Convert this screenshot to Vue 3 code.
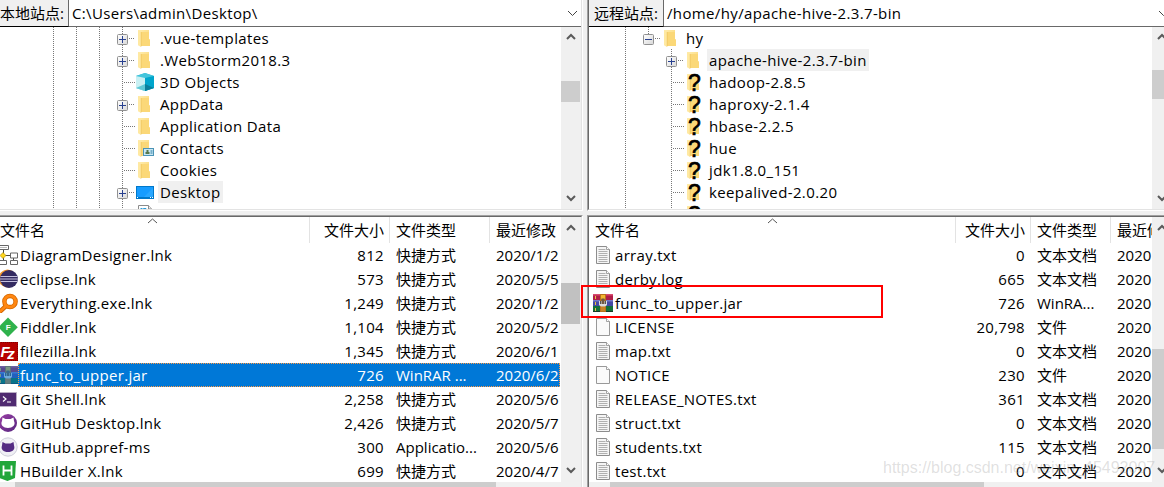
<template>
  <main class="window">
    <!-- icon sprite -->
    <svg class="sprite" aria-hidden="true">
      <defs>
        <linearGradient id="folderFill" x1="0" y1="0" x2="1" y2="1">
          <stop offset="0" stop-color="#ffeeb0" />
          <stop offset="1" stop-color="#f9cf63" />
        </linearGradient>
        <linearGradient id="purpleFill" x1="0" y1="0" x2="1" y2="1">
          <stop offset="0" stop-color="#9a3fa5" />
          <stop offset="1" stop-color="#56267f" />
        </linearGradient>
        <linearGradient id="boxFill" x1="0" y1="0" x2="1" y2="1">
          <stop offset="0" stop-color="#fff" />
          <stop offset="1" stop-color="#d8d8d8" />
        </linearGradient>
      </defs>
      <symbol id="folder" viewBox="0 0 20 20">
        <path d="M3 2h11v9.500h1V18H6z" fill="url(#folderFill)" />
        <path d="M6 4h8v7.500h1V18H6z" fill="#fbd878" />
        <path d="M3 2l3 1.500V19l-3-1.800z" fill="#ffe9a2" />
        <path d="M6.200 4v14.500" stroke="#e9c15a" stroke-width=".6" />
      </symbol>
      <symbol id="unknown" viewBox="0 0 20 20">
        <use href="#folder" />
      </symbol>
      <symbol id="cube" viewBox="0 0 20 20">
        <path d="M10 1l9 3v12l-9 3-9-3V4z" fill="#25b5d3" />
        <path d="M10 1l9 3-9 3-9-3z" fill="#43c5dc" />
        <path d="M1 4l9 2v13l-9-3z" fill="#c9f0f3" />
        <path d="M10 6l9-2v12l-9 3z" fill="#00a5cc" />
        <path d="M1 16l9-4v7z" fill="#5fc9d6" />
        <path d="M10 12l9 4-9 3z" fill="#087f9c" />
      </symbol>
      <symbol id="contacts" viewBox="0 0 20 20">
        <use href="#folder" />
        <rect x="8.500" y="10.500" width="10" height="7" fill="#c8e7f4" stroke="#4b93b5" />
        <path d="M10.500 16v-2h1v-2h2v2h1v2z" fill="#56774d" />
        <path d="M15.500 13h2m-2 2h2" stroke="#2678a0" />
      </symbol>
      <symbol id="desktop" viewBox="0 0 20 20">
        <rect x="1" y="4" width="18" height="13" fill="#0078c9" />
        <rect x="2" y="5" width="16" height="10" fill="#169cff" />
        <path d="M9 15l9-9v9z" fill="#29a7ff" />
        <path d="M2 15.500h1m12 0h1m1 0h1" stroke="#fff" />
      </symbol>
      <symbol id="page" viewBox="0 0 20 20">
        <path d="M3.500 1.500h10l3 3.500v13.500h-13z" fill="#fff" stroke="#8b8b8b" />
        <path d="M8.500 4.500h2.500V8H8.500zm-3 0h2" fill="#2a9bd8" stroke="#2a9bd8" />
        <path d="M13.500 1.500V5h3" fill="#eee" stroke="#8b8b8b" />
      </symbol>
      <symbol id="text" viewBox="0 0 20 20">
        <path d="M3.500 1.500h10l3 3v14h-13z" fill="#f5f5f5" stroke="#8d8d8d" />
        <path d="M13.500 1.500v3h3" fill="#fff" stroke="#8d8d8d" stroke-width=".8" />
        <path d="M5.500 4.500h7m-7 2h9m-9 2h9m-9 2h9m-9 2h9m-9 2h9m-9 2h9" stroke="#b0b0b0" />
      </symbol>
      <symbol id="file" viewBox="0 0 20 20">
        <path d="M3.500 1.500h10l3 3v14h-13z" fill="#fafafa" stroke="#999" />
        <path d="M13.500 1.500v3h3" fill="#fff" stroke="#8d8d8d" stroke-width=".8" />
      </symbol>
      <symbol id="jar" viewBox="0 0 20 20">
        <path d="M0 1h20v6H0z" fill="#b01d48" />
        <path d="M0 1h20v1.500H0z" fill="#d94c70" />
        <path d="M0 7h20v6H0z" fill="#4249a5" />
        <path d="M0 7h20v1.500H0z" fill="#7479c9" />
        <path d="M0 13h20v6H0z" fill="#12713a" />
        <path d="M0 18h20v1H0z" fill="#163e28" />
        <path d="M2.500 3v3m0 3v3m0 3v3" stroke="#f0be3f" />
        <path d="M7 1h6v18H7z" fill="#b8701c" />
        <path d="M8 2h4v4H8z" fill="#f2b62f" />
        <path d="M8 14h4v4H8z" fill="#c98424" />
        <path d="M6 8h8v4l-2 1.500H8L6 12z" fill="#ddd" />
        <path d="M8.500 5.500h3V11h-3z" fill="#715a43" />
        <path d="M7.500 8v3m5-3v3" stroke="#555" />
      </symbol>
      <symbol id="jarSelected" viewBox="0 0 20 20">
        <use href="#jar" />
        <path d="M0 1h20v18H0z" fill="#0078d7" opacity=".5" />
      </symbol>
      <symbol id="diagram" viewBox="0 0 20 20">
        <path d="M5.500 5v11M5 10.500h7M15.500 12v4" stroke="#444" />
        <path d="M.500.500h10v4H.500zM12.500 8h7v5h-7zM.500 15.500h8v4h-8zm12 0h7v4h-7z" fill="#fff" stroke="#666" />
        <path d="M2 2.500h7" stroke="#bbb" />
        <path d="M5 7.500l3 3-3 3-3-3z" fill="#ffd51c" stroke="#a48400" stroke-width=".6" />
      </symbol>
      <symbol id="eclipse" viewBox="0 0 20 20">
        <circle cx="9.500" cy="9.500" r="9" fill="#f3962b" />
        <circle cx="11" cy="10" r="9" fill="#342b62" />
        <path d="M2.500 7.500h17M2 10h18M2.500 12.500h17" stroke="#c3bfdd" stroke-width="1.200" />
      </symbol>
      <symbol id="everything" viewBox="0 0 20 20">
        <path d="M8.500 12.500L1.500 19" stroke="#cd6200" stroke-width="4.500" />
        <circle cx="12" cy="8.500" r="5.600" fill="#fff" stroke="#d86a00" stroke-width="4.500" />
        <path d="M8.500 12.500L1.500 19" stroke="#ff8712" stroke-width="2.800" />
        <circle cx="12" cy="8.500" r="5.600" fill="none" stroke="#ff8712" stroke-width="2.800" />
      </symbol>
      <symbol id="fiddler" viewBox="0 0 20 20">
        <path d="M10 .5l9.800 9.800L10 20 .2 10.300z" fill="#2fb24c" />
      </symbol>
      <symbol id="filezilla" viewBox="0 0 20 20">
        <path d="M0 1h20v19H0z" fill="#b60000" />
        <path d="M1 1.500h18.500v18H1" fill="none" stroke="#7d0000" stroke-dasharray="1 1" />
      </symbol>
      <symbol id="shell" viewBox="0 0 20 20">
        <path d="M.500 3.500h18v14H.500z" fill="#4f2a70" stroke="#b9adc4" />
        <path d="M5 7.500l3 2.500-3 2.500M9 13h4" fill="none" stroke="#fff" stroke-width="1.200" />
      </symbol>
      <symbol id="github" viewBox="0 0 20 20">
        <circle cx="10" cy="10" r="9" fill="url(#purpleFill)" />
        <path d="M4.500 4.500l3 1.500h5l3-1.500.5 3.500c2 4-1.500 7-6 7s-8-3-6-7z" fill="#fff" />
      </symbol>
      <symbol id="githubLight" viewBox="0 0 20 20">
        <circle cx="10" cy="10" r="9.200" fill="#f0f0f5" stroke="#c4c4d2" stroke-width=".8" />
        <path d="M4.500 5l3 1.500h5l3-1.500.5 3.500c1.500 4-1.500 6.500-6 6.500s-7.500-2.500-6-6.500z" fill="#542c83" />
      </symbol>
      <symbol id="hbuilder" viewBox="0 0 20 20">
        <path d="M0 0h18l-1 17-7.500 3L1 17z" fill="#21a63a" />
        <path d="M5.500 4.500v10m8-10v10m-8-5h8" stroke="#fff" stroke-width="1.800" />
      </symbol>
      <symbol id="joint-plus" viewBox="0 0 18 22">
        <path d="M5.500 0v7m0 11v4" class="dots" />
        <path d="M12 11.500h6" class="dots" />
        <rect x=".5" y="7.500" width="10" height="10" rx="1" fill="url(#boxFill)" stroke="#919191" />
        <path d="M2 12.500h7M5.500 9v7" stroke="#28408f" />
      </symbol>
      <symbol id="joint-minus" viewBox="0 0 18 22">
        <path d="M5.500 0v7" class="dots" />
        <path d="M12 11.500h6" class="dots" />
        <rect x=".5" y="7.500" width="10" height="10" rx="1" fill="url(#boxFill)" stroke="#919191" />
        <path d="M2 12.500h7" stroke="#28408f" />
      </symbol>
      <symbol id="joint-line" viewBox="0 0 18 22">
        <path d="M5.500 0v22" class="dots" />
        <path d="M7 11.500h11" class="dots" />
      </symbol>
    </svg>

    <template v-for="pane in panes" :key="pane.side">
      <section class="frame top" :class="pane.side">
        <div class="sunken">
          <div class="address">
            <label>{{ pane.label }}</label>
            <div class="combo">
              <span>{{ pane.path }}</span>
              <svg width="11" height="7" viewBox="0 0 11 7">
                <path d="M1 1l4.500 4.500L10 1" fill="none" stroke="#444" />
              </svg>
            </div>
          </div>
          <div class="scroller">
            <ul class="tree">
              <li v-for="node in pane.tree" :key="node.name" :class="{ deep: node.deep }">
                <i v-for="n in pane.guides" :key="n" class="guide"></i>
                <svg class="joint" width="18" height="22"><use :href="'#joint-' + node.joint" /></svg>
                <svg class="icon" width="20" height="20">
                  <use :href="'#' + node.icon" />
                  <text v-if="node.icon === 'unknown'" class="question" x="4" y="18.500">?</text>
                </svg>
                <span class="node" :class="{ current: node.current }">{{ node.name }}</span>
              </li>
            </ul>
            <div class="vbar">
              <svg width="20" height="20"><path d="M6 12l4-4 4 4" /></svg>
              <div class="thumb" :style="{ marginTop: pane.treeBar[0] + 'px', height: pane.treeBar[1] + 'px' }"></div>
              <svg class="end" width="20" height="20"><path d="M6 7l4 4 4-4" /></svg>
            </div>
          </div>
        </div>
      </section>
    </template>

    <template v-for="pane in panes" :key="pane.side">
      <section class="frame bottom" :class="pane.side">
        <div class="sunken">
          <div class="scroller">
            <div class="table">
              <header class="record head">
                <b class="name">
                  文件名
                  <svg class="sort" width="11" height="6"><path d="M1 5l4.500-4L10 5" fill="none" stroke="#555" /></svg>
                </b>
                <b class="size">文件大小</b>
                <b>文件类型</b>
                <b>最近修改</b>
              </header>
              <div v-for="file in pane.files" :key="file[1]" class="row" :class="{ selected: file[5] }">
                <svg class="icon" width="20" height="20">
                  <use :href="'#' + file[0]" />
                  <text v-if="file[0] === 'fiddler'" class="letter" x="7.800" y="13.200">F</text>
                  <text v-if="file[0] === 'filezilla'" class="letter fz" x="2.500" y="16">F<tspan dx="-2.500" dy="1.500">z</tspan></text>
                </svg>
                <div class="record">
                  <span class="name">{{ file[1] }}</span>
                  <span class="size">{{ file[2] }}</span>
                  <span>{{ file[3] }}</span>
                  <span>{{ file[4] }}</span>
                </div>
              </div>
            </div>
            <div class="vbar">
              <svg width="20" height="20"><path d="M6 13l4-4 4 4" /></svg>
              <div class="thumb" :style="{ marginTop: pane.listBar[0] + 'px', height: pane.listBar[1] + 'px' }"></div>
              <svg class="end" width="20" height="20"><path d="M6 6l4 4 4-4" /></svg>
            </div>
          </div>
          <div class="hbar">
            <div class="thumb" :style="{ width: pane.hThumb + 'px' }"></div>
          </div>
        </div>
      </section>
    </template>

    <div class="marker"></div>
    <div class="watermark">https://blog.csdn.net/weixin_45492007</div>
  </main>
</template>

<script setup>
const panes = [
  {
    side: "local",
    label: "本地站点:",
    path: "C:\\Users\\admin\\Desktop\\",
    guides: 3,
    treeBar: [34, 21],
    listBar: [46, 41],
    hThumb: 481,
    tree: [
      { name: ".vue-templates", joint: "plus", icon: "folder" },
      { name: ".WebStorm2018.3", joint: "plus", icon: "folder" },
      { name: "3D Objects", joint: "line", icon: "cube" },
      { name: "AppData", joint: "plus", icon: "folder" },
      { name: "Application Data", joint: "line", icon: "folder" },
      { name: "Contacts", joint: "line", icon: "contacts" },
      { name: "Cookies", joint: "line", icon: "folder" },
      { name: "Desktop", joint: "plus", icon: "desktop", current: true },
      { name: "", joint: "plus", icon: "page" },
    ],
    // icon, name, size, type, date, selected
    files: [
      ["diagram", "DiagramDesigner.lnk", "812", "快捷方式", "2020/1/2"],
      ["eclipse", "eclipse.lnk", "573", "快捷方式", "2020/5/5"],
      ["everything", "Everything.exe.lnk", "1,249", "快捷方式", "2020/1/2"],
      ["fiddler", "Fiddler.lnk", "1,104", "快捷方式", "2020/5/2"],
      ["filezilla", "filezilla.lnk", "1,345", "快捷方式", "2020/6/1"],
      ["jarSelected", "func_to_upper.jar", "726", "WinRAR ...", "2020/6/2", true],
      ["shell", "Git Shell.lnk", "2,258", "快捷方式", "2020/5/6"],
      ["github", "GitHub Desktop.lnk", "2,426", "快捷方式", "2020/5/7"],
      ["githubLight", "GitHub.appref-ms", "300", "Applicatio...", "2020/5/6"],
      ["hbuilder", "HBuilder X.lnk", "699", "快捷方式", "2020/4/7"],
    ],
  },
  {
    side: "remote",
    label: "远程站点:",
    path: "/home/hy/apache-hive-2.3.7-bin",
    guides: 1,
    treeBar: [23, 29],
    listBar: [112, 100],
    hThumb: 374,
    tree: [
      { name: "hy", joint: "minus", icon: "folder" },
      { name: "apache-hive-2.3.7-bin", joint: "plus", icon: "folder", deep: true, current: true },
      { name: "hadoop-2.8.5", joint: "line", icon: "unknown", deep: true },
      { name: "haproxy-2.1.4", joint: "line", icon: "unknown", deep: true },
      { name: "hbase-2.2.5", joint: "line", icon: "unknown", deep: true },
      { name: "hue", joint: "line", icon: "unknown", deep: true },
      { name: "jdk1.8.0_151", joint: "line", icon: "unknown", deep: true },
      { name: "keepalived-2.0.20", joint: "line", icon: "unknown", deep: true },
      { name: "", joint: "line", icon: "unknown", deep: true },
    ],
    files: [
      ["text", "array.txt", "0", "文本文档", "2020"],
      ["text", "derby.log", "665", "文本文档", "2020"],
      ["jar", "func_to_upper.jar", "726", "WinRA...", "2020"],
      ["file", "LICENSE", "20,798", "文件", "2020"],
      ["text", "map.txt", "0", "文本文档", "2020"],
      ["file", "NOTICE", "230", "文件", "2020"],
      ["text", "RELEASE_NOTES.txt", "361", "文本文档", "2020"],
      ["text", "struct.txt", "0", "文本文档", "2020"],
      ["text", "students.txt", "115", "文本文档", "2020"],
      ["text", "test.txt", "0", "文本文档", "2020"],
    ],
  },
]
</script>

<style>
html,
body {
  overflow: hidden;
}
</style>

<style scoped>
.window {
  position: relative;
  display: grid;
  grid-template-columns: 583px 587px;
  grid-template-rows: 211px 272px;
  gap: 4px;
  width: 1164px;
  height: 487px;
  overflow: hidden;
  background: #f0f0f0;
  color: #000;
  font-family: "Open Sans", "Noto Sans CJK SC", sans-serif;
  font-size: 15px;
}

.sprite {
  position: absolute;
  width: 0;
  height: 0;
}

.dots {
  fill: none;
  stroke: #777;
  stroke-dasharray: 1 1;
}

svg {
  flex: none;
  display: block;
}

.question {
  font-family: "Liberation Sans", sans-serif;
  font-size: 23px;
  stroke: #000;
  stroke-width: 0.7;
}

.letter {
  fill: #fff;
  font: 700 8px "Liberation Sans", sans-serif;
}

.letter.fz {
  font-size: 15px;
  font-style: italic;
}

/* sunken two-tone frames */
.frame {
  min-width: 0;
  border: 1px solid;
  border-color: #a0a0a0 #fff #fff #a0a0a0;
}

.sunken {
  display: flex;
  flex-direction: column;
  height: 100%;
  box-sizing: border-box;
  overflow: hidden;
  border: 1px solid;
  border-color: #696969 #e3e3e3 #e3e3e3 #696969;
  background: #fff;
}

.frame.top,
.top .sunken {
  border-top: 0;
}

.frame.local,
.local .sunken {
  border-left: 0;
}

.frame.bottom,
.bottom .sunken {
  border-bottom: 0;
}

.address {
  display: flex;
  flex: none;
  height: 27px;
  line-height: 26px;
}

.address label {
  box-sizing: border-box;
  width: 69px;
  border-right: 1px solid #696969;
  border-bottom: 1px solid #000;
  background: #f0f0f0;
  white-space: nowrap;
}

.remote .address label {
  width: 75px;
  padding-left: 5px;
}

.combo {
  display: flex;
  flex: 1;
  align-items: center;
  justify-content: space-between;
  padding: 0 3px;
  border-bottom: 1px solid #696969;
  letter-spacing: 0.36px;
}

.scroller {
  display: flex;
  flex: 1;
  min-height: 0;
  overflow: hidden;
}

.bottom .scroller {
  flex: none;
  height: 265px;
}

.tree {
  flex: 1;
  margin: 0;
  padding: 0;
  list-style: none;
}

.tree li {
  display: flex;
  align-items: center;
  height: 22px;
}

.guide {
  width: 1px;
  height: 22px;
  margin-left: 22px;
  background: repeating-linear-gradient(#777 0 1px, transparent 1px 2px);
}

.guide:first-child {
  margin-left: 53px;
}

.remote .guide:first-child {
  margin-left: 36px;
}

.joint {
  margin-left: 17px;
}

.deep .joint {
  margin-left: 40px;
}

.node {
  margin-left: 3px;
  padding: 0 2px;
  letter-spacing: 0.38px;
  line-height: 22px;
  white-space: nowrap;
}

.node.current {
  background: #f0f0f0;
}

.vbar {
  display: flex;
  flex: none;
  flex-direction: column;
  width: 20px;
  background: #f0f0f0;
}

.vbar path {
  fill: none;
  stroke: #5a5a5a;
  stroke-width: 2;
}

.vbar .thumb {
  width: 19px;
}

.vbar .end {
  margin-top: auto;
}

.thumb {
  flex: none;
  background: #cdcdcd;
}

.bottom.local .vbar .thumb {
  background: #c1c1c1;
}

.table {
  flex: 1;
  min-width: 0;
  margin-right: 1px;
  overflow: hidden;
}

.bottom.remote .table {
  margin-right: 0;
}

.record {
  display: grid;
  flex: 1;
  grid-template-columns: 292px 80px 100px 1fr;
  min-width: 0;
  overflow: hidden;
  line-height: 24px;
  white-space: nowrap;
}

.remote .record {
  grid-template-columns: 343px 75px 80px 1fr;
}

.record > * {
  min-width: 0;
  padding: 0 6px;
  overflow: hidden;
}

.record > :last-child {
  padding-right: 0;
}

.record .name {
  padding-left: 2px;
}

.record .size {
  text-align: right;
}

.row .name,
.row .size {
  letter-spacing: 0.3px;
}

.local .record.head {
  grid-template-columns: 310px 80px 100px 1fr;
}

.remote .record.head {
  grid-template-columns: 367px 75px 80px 1fr;
}

.head {
  height: 26px;
  line-height: 27px;
}

.head b {
  border-right: 1px solid #e3e3e3;
  font-weight: 400;
}

.head b:last-child {
  border-right: 0;
}

.head .size {
  padding-right: 5px;
}

.head .name {
  display: grid;
  grid-template-columns: 1fr 11px 1fr;
  padding: 0;
}

.remote .head .name {
  padding-left: 6px;
  padding-right: 6px;
}

.local .head .name {
  padding-right: 5px;
}

.sort {
  margin-top: 1px;
}

.row {
  display: flex;
  align-items: center;
  height: 24px;
}

.row .icon {
  margin-left: 4px;
}

.local .row .icon {
  margin-left: -2px;
}

.selected .record {
  background: #0078d7;
  color: #fff;
  outline: 1px dotted #ff9a45;
  outline-offset: -1px;
}

.hbar {
  flex: 1;
  padding-left: 21px;
  background: #f0f0f0;
}

.local .hbar {
  padding-left: 15px;
}

.hbar .thumb {
  height: 100%;
}

/* callout round the uploaded jar */
.marker {
  position: absolute;
  left: 581px;
  top: 285px;
  box-sizing: border-box;
  width: 302px;
  height: 33px;
  border: 2px solid #f00;
}

.watermark {
  position: absolute;
  left: 883px;
  top: 458px;
  color: rgba(160, 160, 160, 0.32);
  font-family: "Liberation Sans", sans-serif;
  font-size: 16px;
  line-height: 20px;
  white-space: nowrap;
}
</style>
